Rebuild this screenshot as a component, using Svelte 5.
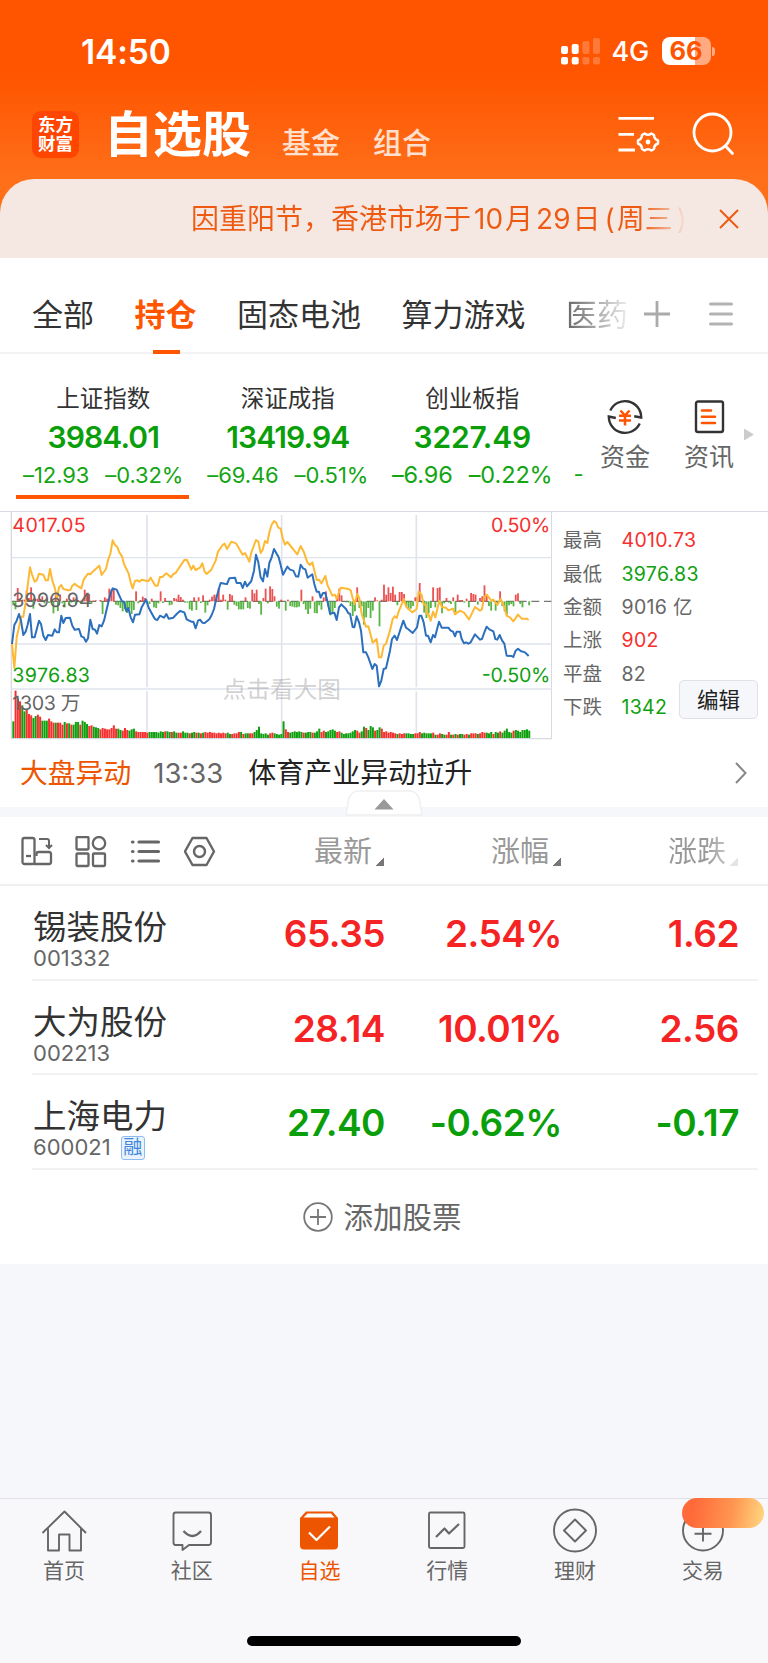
<script lang="ts">
  interface Index { name: string; value: string; change: string; pct: string }
  interface Stock { name: string; code: string; price: string; pct: string; diff: string; up: boolean; margin?: boolean }

  const groups = ['全部', '持仓', '固态电池', '算力游戏', '医药']
  let activeGroup = $state('持仓')

  const indices: Index[] = [
    { name: '上证指数', value: '3984.01', change: '–12.93', pct: '–0.32%' },
    { name: '深证成指', value: '13419.94', change: '–69.46', pct: '–0.51%' },
    { name: '创业板指', value: '3227.49', change: '–6.96', pct: '–0.22%' },
  ]
  let activeIndex = $state(0)

  const stats = [
    { label: '最高', value: '4010.73', tone: 'up' },
    { label: '最低', value: '3976.83', tone: 'down' },
    { label: '金额', value: '9016 亿', tone: '' },
    { label: '上涨', value: '902', tone: 'up' },
    { label: '平盘', value: '82', tone: '' },
    { label: '下跌', value: '1342', tone: 'down' },
  ]

  const columns = ['最新', '涨幅', '涨跌']

  const stocks: Stock[] = [
    { name: '锡装股份', code: '001332', price: '65.35', pct: '2.54%', diff: '1.62', up: true },
    { name: '大为股份', code: '002213', price: '28.14', pct: '10.01%', diff: '2.56', up: true },
    { name: '上海电力', code: '600021', price: '27.40', pct: '-0.62%', diff: '-0.17', up: false, margin: true },
  ]

  const nav = ['首页', '社区', '自选', '行情', '理财', '交易']
  let activeNav = $state('自选')

  // ── Chart data (3 chart units per pixel) ───────────────────────────────────
  const average =
    '36,415 43,487 50,395 57,365 64,333 70,333 77,290 83,240 90,185 97,210 104,228 110,224 117,204 130,207 137,224 144,224 150,190 157,225 164,245 171,280 177,245 184,238 190,250 204,254 211,253 217,240 224,234 231,240 244,248 251,222 264,204 271,206 278,198 298,180 305,208 318,190 325,160 331,145 338,104 345,118 352,124 358,140 366,152 372,175 386,204 392,230 398,248 405,226 412,224 418,228 425,222 445,227 452,216 466,240 473,240 480,214 487,214 499,203 513,215 520,205 527,202 540,182 554,162 561,163 574,192 580,180 587,193 600,186 607,173 614,198 620,205 634,192 647,165 654,138 668,118 674,114 681,130 694,108 708,113 728,147 735,142 748,168 754,140 768,103 775,108 782,142 788,132 795,106 802,112 808,80 815,57 822,46 828,50 835,66 842,69 848,97 855,117 862,109 892,146 902,121 912,140 922,170 930,178 937,170 950,223 957,222 964,233 976,211 983,240 997,270 1005,267 1010,280 1022,246 1046,250 1052,254 1058,278 1064,295 1072,265 1078,278 1085,325 1098,363 1105,362 1110,380 1118,411 1130,400 1137,455 1144,455 1151,420 1158,414 1170,375 1178,340 1184,332 1190,337 1197,315 1212,280 1218,302 1225,310 1237,320 1250,310 1256,258 1265,268 1271,296 1278,298 1280,325 1285,324 1292,345 1299,318 1306,335 1318,285 1326,304 1338,306 1345,314 1359,309 1365,326 1380,315 1392,321 1407,341 1425,304 1440,315 1446,310 1452,275 1460,267 1474,285 1480,282 1492,298 1502,280 1513,304 1520,330 1530,335 1540,347 1554,327 1565,339 1580,339 1586,343'
  const price =
    '36,415 43,358 50,345 57,325 63,345 70,388 77,378 83,357 90,325 96,395 104,395 117,345 123,355 130,390 137,403 144,388 157,390 164,371 171,380 177,380 184,330 190,352 197,337 210,336 217,360 224,372 237,370 244,392 251,395 258,408 264,398 271,342 278,370 285,372 291,384 298,358 305,362 312,345 318,320 325,290 332,262 338,248 350,252 358,270 366,287 372,288 379,317 385,307 392,335 399,350 405,327 418,326 425,305 438,282 446,306 460,332 466,341 472,343 480,330 492,336 499,325 506,339 520,336 530,325 540,316 553,320 560,341 574,348 580,348 587,368 594,345 600,342 607,351 614,352 628,341 635,328 642,310 648,282 655,255 662,232 674,234 681,235 688,218 705,216 710,232 722,232 728,247 735,228 741,242 754,226 762,195 768,147 775,170 782,215 789,227 795,190 802,213 808,172 815,155 822,130 836,155 842,178 849,207 862,183 870,192 880,195 888,212 895,213 902,177 909,188 916,191 923,216 930,211 937,206 943,235 950,258 957,258 962,276 969,262 976,262 983,290 990,324 1003,321 1010,343 1017,305 1024,296 1038,310 1045,323 1050,324 1058,364 1063,365 1070,332 1077,350 1083,375 1090,440 1098,440 1105,455 1117,490 1124,475 1130,480 1137,542 1144,525 1151,490 1158,488 1170,435 1176,400 1184,390 1191,403 1204,363 1210,345 1218,366 1224,370 1238,382 1251,365 1258,330 1264,330 1271,350 1278,390 1284,390 1292,410 1299,388 1305,395 1317,348 1325,366 1345,366 1352,375 1359,378 1365,392 1370,378 1380,378 1385,400 1392,413 1398,410 1405,414 1412,410 1425,386 1440,402 1446,400 1453,380 1460,363 1468,371 1480,377 1486,400 1492,402 1499,388 1506,404 1513,414 1520,450 1535,451 1540,454 1547,435 1554,429 1562,436 1575,440 1586,451'

  // per-minute momentum, above or below the previous close
  const momentum = [
    -12, -24, 40, 8, 5, 5, 32, 10, 42, -22, 8, 8, 6, 15, -6, 4, -5, 14, -36, 18, -29, 20, -6, -18, 8, -12, -4, 12, -10, 4, -5, 5,
    35, 22, 22, -8, 2, 3, 0, 4, -38, 12, 8, 38, 35, 38, -10, -12, -20, -30, -24, -35, -22, -38, -26, 30, -6, 4, 14, 10, -5, -8, 8, -18,
    -20, -6, 30, -5, 10, 0, -12, -10, 10, 8, 20, 13, 5, -4, -4, -24, -28, 12, -26, 12, -5, 18, -34, -12, 5, 14, 20, 20, 40, 5, 20, 5,
    -25, 22, 18, -10, -14, -24, -24, -24, 12, -20, -22, 35, 24, 35, -8, -40, 10, 38, -6, 45, 37, 15, -16, -22, 5, 0, -28, 5, -14, -16, -18, -18,
    -16, 35, -8, -25, -38, -22, 15, -35, -36, -12, -25, 12, 30, -15, -42, -36, -20, 12, 38, 18, 0, -3, -3, -14, -44, -30, 42, -20, -15, -70, -48, -20,
    -50, -28, 12, 3, -75, 5, 50, 20, 42, 25, 44, 20, -12, 28, 28, 22, -14, -24, -22, -14, 12, 12, 55, -4, -34, -50, -35, -20, 42, -18, 40, 42,
    -36, -6, 10, -4, -8, 12, -32, 20, 4, 4, -4, 8, -18, 25, 22, 20, -10, 10, 15, 48, 20, -14, -28, 4, -28, -6, 30, -14, -30, -40, -12, -8,
    -15, 20, 24, -8, -18, 0, 0, -12,
  ]

  // volume per minute, negative for minutes that closed lower
  const volume = [
    -50, 142, 118, 110, -98, -80, 84, 72, 68, -60, -66, 70, 64, -52, -52, -52, 58, 50, 46, -46, 46, 46, 40, -48, 44, -44, 40, -40, -48, -48, 40, -52,
    -48, -42, 36, 38, -34, -32, -30, 26, 30, 28, 26, 26, 30, 38, 28, -28, -24, 22, 30, 24, -22, -26, -28, 20, 18, 18, 18, 18, 16, -18, -18, -18,
    -18, -16, -20, -18, 20, -20, -18, 18, -20, -16, 16, 16, -20, -16, -16, 14, -16, -18, 16, -16, 14, -16, 18, 16, 18, 16, 16, 14, 16, 14, 16, 14,
    -16, -12, 12, 14, 14, 18, -18, 12, -14, -14, 14, 14, -18, -24, -34, -14, -12, -14, -10, 14, 16, -14, -12, -10, -12, -50, 26, 18, -16, -18, -20, -18,
    -20, -18, 16, -16, -18, -18, 16, -16, -20, -28, 18, 22, -18, -20, -24, -26, -22, 18, 20, -16, -12, -14, -14, -16, -20, -24, 22, 16, -20, -34, 30, -24,
    -36, -32, 22, -24, -32, 28, 18, 20, 16, 18, 16, 14, -12, 14, 12, 14, -14, -14, -12, -12, 14, 14, 18, -14, -16, -14, -14, -14, 16, -10, 10, 14,
    -12, -10, 10, 18, -10, 10, -12, 10, -12, -12, 10, 12, -10, 14, 14, 14, -12, 14, 18, 16, -16, -14, -18, 12, -18, -16, 20, -16, -22, -28, -18, -16,
    22, -24, -22, -18, -24, -24, -26, -22,
  ]

  const barX = (i: number) => 37 + i * 6.7
  const upColor = '#f5302e'
  const downColor = '#0fa00f'
</script>

<main>
  <header>
    <div class="status">
      <span class="clock">14:50</span>
      <div class="status-right">
        <svg class="signal" width="40" height="28" viewBox="0 0 40 28" fill="#fff">
          <rect x="0" y="9" width="7" height="8" rx="2" />
          <rect x="10.7" y="7" width="7" height="10" rx="2" />
          <rect x="0" y="20" width="7" height="7.5" rx="2" />
          <rect x="10.7" y="20" width="7" height="7.5" rx="2" />
          <g opacity=".22">
            <rect x="21.4" y="4" width="7" height="13" rx="2" />
            <rect x="32" y="1" width="7" height="16" rx="2" />
            <rect x="21.4" y="20" width="7" height="7.5" rx="2" />
            <rect x="32" y="20" width="7" height="7.5" rx="2" />
          </g>
        </svg>
        <span class="network">4G</span>
        <span class="battery">66</span>
        <span class="nub"></span>
      </div>
    </div>
    <div class="title-row">
      <div class="logo"><span>东方</span><span>财富</span></div>
      <h1>自选股</h1>
      <a class="sub" href="#fund">基金</a>
      <a class="sub" href="#portfolio">组合</a>
      <svg class="manage" width="44" height="44" viewBox="0 0 44 44" fill="none" stroke="#fff" stroke-width="2.8">
        <path d="M1.5 6.3H37M1.5 22.3H17M1.5 38H18" />
        <path d="M27.5 21.5Q31 24 34.5 21.5L37 23Q37 27 41 28.5V31.5Q37 33 37 37L34.5 38.5Q31 36 27.5 38.5L25 37Q25 33 21 31.5V28.5Q25 27 25 23Z" stroke-width="2.5" stroke-linejoin="round" />
        <circle cx="31" cy="30" r="2.4" fill="#fff" stroke="none" />
      </svg>
      <svg width="44" height="44" viewBox="0 0 44 44" fill="none" stroke="#fff" stroke-width="2.8" stroke-linecap="round">
        <circle cx="20.5" cy="20.5" r="18.5" /><path d="M33.500 34L40.500 41.5" />
      </svg>
    </div>
  </header>

  <div class="notice">
    <p>因重阳节，香港市场于<span class="num">10</span>月<span class="num">29</span>日<span class="paren">(</span>周三<span class="paren">)</span></p>
    <svg width="20" height="20" viewBox="0 0 20 20" stroke="#ee5a12" stroke-width="2"><path d="M1 1L19 19M19 1L1 19" /></svg>
  </div>

  <nav class="groups">
    {#each groups as group (group)}
      <button class:active={group === activeGroup} class:faded={group === '医药'} onclick={() => (activeGroup = group)}>{group}</button>
    {/each}
    <svg class="plus" width="26" height="26" viewBox="0 0 26 26" stroke="#aaa" stroke-width="2.8"><path d="M0 13H26M13 0V26" /></svg>
    <svg width="24" height="26" viewBox="0 0 24 26" stroke="#b3b3b3" stroke-width="3" stroke-linecap="round"><path d="M1.5 3H22.5M1.5 13H22.5M1.5 23H22.5" /></svg>
  </nav>

  <section class="indices">
    <div class="index-list">
      {#each indices as index, i (index.name)}
        <button class="index" class:selected={i === activeIndex} class:roomy={index.change.length < 6} onclick={() => (activeIndex = i)}>
          <span class="index-name">{index.name}</span>
          <span class="index-value">{index.value}</span>
          <span class="index-change"><span>{index.change}</span><span>{index.pct}</span></span>
        </button>
      {/each}
      <span class="next-index">-</span>
    </div>
    <button class="shortcut">
      <svg width="38" height="38" viewBox="0 0 38 38" fill="none" stroke="#333" stroke-width="2.4">
        <path d="M4.3 12.5A16.2 16.2 0 0 1 35.2 19.5L28.2 18.2M33.7 25.5A16.2 16.2 0 0 1 2.8 18.5L9.8 20" />
        <path d="M14.5 12.5L19 17.5L23.5 12.5M13 17.8H25M13 22.6H25M19 17.5V27.5" stroke="#ff5500" stroke-width="2.5" />
      </svg>
      资金
    </button>
    <button class="shortcut">
      <svg width="38" height="38" viewBox="0 0 38 38" fill="none" stroke="#333" stroke-width="2.4">
        <rect x="6" y="3.5" width="27" height="30.5" rx="2" />
        <path d="M12 12.5H21M12 18.7H25M12 25H25" stroke="#ff5500" stroke-width="2.6" stroke-linecap="round" />
      </svg>
      资讯
    </button>
    <svg class="more" width="10" height="13" viewBox="0 0 10 13" fill="#ccc"><path d="M0 0.5L10 6.5L0 12.5Z" /></svg>
  </section>

  <section class="board">
    <svg class="chart" width="552" height="229" viewBox="0 19 1656 687" text-rendering="geometricPrecision">
      <g fill="none" stroke="#dfe3ec" stroke-width="4">
        <path d="M34 700V19M1655 19V700M34 699H1656" stroke="#d8dae2" />
        <path d="M36 156H1654M36 415H1654" />
        <path d="M441 28V545M441 557V697M845 28V545M845 557V697M1249 28V545M1249 557V697" stroke-width="5" />
        <path d="M34 550H1656" stroke-width="5" />
      </g>
      <path d="M36 287H1654" stroke="#777" stroke-width="4" stroke-dasharray="24 14" />
      <g opacity=".88">
        {#each momentum as m, i}
          <rect x={barX(i)} y={m > 0 ? 287 - m : 287} width="5.5" height={Math.abs(m)} fill={m > 0 ? '#e93b3b' : '#44ab2c'} />
        {/each}
      </g>
      {#each volume as v, i}
        <rect x={barX(i)} y={697 - Math.abs(v)} width="6" height={Math.abs(v)} fill={v > 0 ? upColor : downColor} />
      {/each}
      <polyline points={average} fill="none" stroke="#fdb933" stroke-width="6" stroke-linejoin="round" />
      <polyline points={price} fill="none" stroke="#2b6fbd" stroke-width="6" stroke-linejoin="round" />
      <g font-size="59">
        <text x="37" y="80" fill={upColor} textLength="220">4017.05</text>
        <text x="37" y="304" fill="#666" textLength="238">3996.94</text>
        <text x="37" y="528" fill={downColor} textLength="233">3976.83</text>
        <text x="37" y="614" fill="#666" textLength="204">1303 万</text>
        <text x="1651" y="80" fill={upColor} text-anchor="end" textLength="178">0.50%</text>
        <text x="1651" y="528" fill={downColor} text-anchor="end" textLength="206">-0.50%</text>
        <text x="668" y="577" fill="#888" fill-opacity=".4" font-size="71">点击看大图</text>
      </g>
    </svg>
    <div class="stats">
      {#each stats as stat (stat.label)}
        <div class="stat"><span>{stat.label}</span><b class={stat.tone}>{stat.value}</b></div>
      {/each}
      <button class="edit">编辑</button>
    </div>
  </section>

  <section class="news">
    <span class="tag">大盘异动</span>
    <span class="time">13:33</span>
    <span class="headline">体育产业异动拉升</span>
    <svg width="12" height="22" viewBox="0 0 12 22" fill="none" stroke="#888" stroke-width="2"><path d="M1 1L10.5 11L1 21" /></svg>
  </section>

  <div class="divider">
    <svg width="78" height="26" viewBox="0 0 78 26">
      <path d="M1 25L3.5 10Q5.5 1 14 1H64Q72.5 1 74.5 10L77 25Z" fill="#fff" stroke="#eff0f2" stroke-width="1.5" />
      <path d="M29.5 19.5L39 9L48.5 19.5Z" fill="#999" />
    </svg>
  </div>

  <section class="list-head">
    <div class="tools">
      <svg width="32" height="32" viewBox="0 0 32 32" fill="none" stroke="#666" stroke-width="2.3">
        <rect x="1.5" y="2" width="12" height="26" rx="2" /><path d="M5 20H10" />
        <path d="M18 3H26Q28 3 28 5V12M25 9L28 12L31 9" stroke-width="2" />
        <path d="M15.500 20V18Q15.500 16 17.500 16H28Q30 16 30 18.500V26Q30 28 28 28H13" />
      </svg>
      <svg width="32" height="32" viewBox="0 0 32 32" fill="none" stroke="#666" stroke-width="2.3">
        <rect x="1.5" y="1" width="12" height="12.5" rx="1" /><rect x="1.5" y="17.500" width="12" height="12.5" rx="1" />
        <rect x="18" y="17.500" width="12" height="12.5" rx="1" /><circle cx="24" cy="7.2" r="6.2" />
      </svg>
      <svg width="32" height="32" viewBox="0 0 32 32" stroke="#666" stroke-width="3.2" stroke-linecap="round">
        <path d="M9 6H28.5M9 15.5H28.5M9 25H28.5M2.5 6H3M2.5 15.5H3M2.5 25H3" />
      </svg>
      <svg width="32" height="32" viewBox="0 0 32 32" fill="none" stroke="#666" stroke-width="2.4" stroke-linejoin="round">
        <path d="M8.5 2H22.5L30 15.5L22.5 29H8.500L1 15.5Z" /><circle cx="15.5" cy="15.5" r="5.5" />
      </svg>
    </div>
    {#each columns as column (column)}
      <button class="column" class:fading={column === '涨跌'}>{column}<i></i></button>
    {/each}
  </section>

  <section class="stocks">
    {#each stocks as stock (stock.code)}
      <div class="stock" class:rise={stock.up}>
        <div class="who">
          <span class="name">{stock.name}</span>
          <span class="code">{stock.code}{#if stock.margin}<em>融</em>{/if}</span>
        </div>
        <span class="figure">{stock.price}</span>
        <span class="figure">{stock.pct}</span>
        <span class="figure">{stock.diff}</span>
      </div>
    {/each}
    <button class="add">
      <svg width="30" height="30" viewBox="0 0 30 30" fill="none" stroke="#777" stroke-width="1.8"><circle cx="15" cy="15" r="13.8" /><path d="M7 15H23M15 7V23" /></svg>
      <span>添加股票</span>
    </button>
  </section>

  <footer>
    <nav class="bottom-nav">
      {#each nav as item (item)}
        <button class:active={item === activeNav} onclick={() => (activeNav = item)}>
          <svg width="46" height="46" viewBox="0 0 46 46" fill="none" stroke="#666" stroke-width="1.9" stroke-linejoin="round">
            {#if item === '首页'}
              <path d="M1.5 25L23.5 3.5L45 25M7 20.5V42.5H18V26.5H28.5V42.5H40V20.5" />
            {:else if item === '社区'}
              <path d="M6.5 4.5H39.5Q42 4.500 42 7V34.5Q42 37 39.5 37H20L13.500 42V37H6.5Q4.5 37 4.5 34.5V7Q4.5 4.5 6.5 4.5Z" />
              <path d="M14.5 23Q23.5 33 32 23" stroke-width="2.3" />
            {:else if item === '自选'}
              <path d="M10 3.5H36.5L42 10V37.5Q42 41.5 38 41.5H8Q4 41.5 4 37.5V10Z" fill="#ee5500" stroke="none" />
              <path d="M11.5 5.5H35L38.5 9.5H7.5Z" fill="#fff" stroke="none" />
              <path d="M13 24.5L20.5 32L34 18.5" stroke="#fff" stroke-width="2.2" />
            {:else if item === '行情'}
              <rect x="5" y="4.5" width="35.5" height="35.5" rx="1.5" />
              <path d="M12 29L20.5 20.5L25 25.5L35 16" stroke-width="2.2" />
            {:else if item === '理财'}
              <circle cx="23" cy="22.5" r="21" /><path d="M23 11.5L34 22.5L23 33.5L12 22.5Z" />
            {:else}
              <circle cx="23" cy="22.5" r="20" /><path d="M14.5 25.8H31.5M23 17V33.5" />
            {/if}
          </svg>
          {item}
          {#if item === '交易'}<span class="pill"></span>{/if}
        </button>
      {/each}
    </nav>
    <div class="home-bar"></div>
  </footer>
</main>

<style>
  :global(body) { background: #f6f7f9; }

  main {
    width: 768px;
    height: 1663px;
    display: flex;
    flex-direction: column;
    overflow: hidden;
    background: #f6f7fa;
    font-family: Inter, "Noto Sans CJK SC", sans-serif;
    color: #333;
  }
  main * { box-sizing: border-box; }
  svg { display: block; flex-shrink: 0; }

  button {
    font: inherit;
    color: inherit;
    background: none;
    border: none;
    padding: 0;
    margin: 0;
    white-space: nowrap;
    cursor: pointer;
  }

  header {
    height: 214px;
    flex-shrink: 0;
    background: linear-gradient(#ff5500 0, #ff5500 76px, #ff6e19 175px);
    color: #fff;
  }

  .status {
    display: flex;
    justify-content: space-between;
    align-items: center;
    height: 102px;
    padding: 0 53px 0 81px;
  }
  .clock { padding-top: 1px; font-size: 33.5px; font-weight: 600; letter-spacing: -.1px; }
  .status-right { display: flex; align-items: center; }
  .network { width: 37px; margin: 1px 13px 0 11px; font-size: 27px; font-weight: 500; letter-spacing: -.3px; }
  .battery {
    width: 49px;
    height: 28px;
    border-radius: 8px;
    background: linear-gradient(90deg, #fff 33px, #ffaa80 33px);
    color: #ff5500;
    font-size: 25.5px;
    font-weight: 700;
    line-height: 28px;
    text-align: center;
  }
  .nub { width: 3px; height: 9px; margin-left: 1.5px; border-radius: 0 4px 4px 0; background: #ffaa80; }

  .title-row { display: flex; align-items: center; height: 64px; padding: 0 32px; }
  .logo {
    width: 47px;
    height: 47px;
    border-radius: 9px;
    background: #ff4600;
    display: flex;
    flex-direction: column;
    align-items: center;
    justify-content: center;
    font-size: 17.5px;
    font-weight: 700;
    line-height: 19.5px;
  }
  h1 { margin: 1px 31px 0 25px; font-size: 49px; font-weight: 700; line-height: 60px; }
  .sub { margin: 20px 33px 0 0; font-size: 29px; font-weight: 500; line-height: 36px; color: #ffe0cf; text-decoration: none; }
  .manage { margin: 0 31px 0 auto; }

  .notice {
    display: flex;
    align-items: center;
    height: 79px;
    margin-top: -35px;
    padding: 0 29px 0 191px;
    border-radius: 34px 34px 0 0;
    background: #f5e8e3;
    flex-shrink: 0;
  }
  .notice p {
    flex: 1;
    margin: 0;
    font-size: 28px;
    line-height: 40px;
    white-space: nowrap;
    background: linear-gradient(90deg, #ee5a12 450px, #f5e0d8 494px);
    background-clip: text;
    color: transparent;
  }
  .num { padding: 0 2px 0 3px; }
  .paren { padding: 0 2px 0 4px; }

  .groups {
    display: flex;
    align-items: center;
    height: 96px;
    padding: 18px 35px 0 32px;
    background: #fff;
    border-bottom: 2px solid #f3f3f5;
    flex-shrink: 0;
  }
  .groups button { position: relative; height: 77px; margin-right: 40.5px; font-size: 31px; line-height: 77px; }
  .groups .active { color: #ff5500; font-weight: 700; }
  .groups .active::after {
    content: '';
    position: absolute;
    left: 50%;
    bottom: -1px;
    width: 27px;
    height: 4px;
    margin-left: -13px;
    background: #ff5500;
  }
  .groups .faded { margin-right: 16px; background: linear-gradient(90deg, #666, #eee); background-clip: text; color: transparent; }
  .plus { margin-right: auto; }

  .indices { display: flex; height: 157px; background: #fff; flex-shrink: 0; }
  .index-list { display: flex; width: 585px; margin-right: -2px; padding-left: 11px; overflow: hidden; }
  .index {
    position: relative;
    display: flex;
    flex-direction: column;
    align-items: center;
    width: 184.5px;
    flex-shrink: 0;
    padding-top: 28px;
  }
  .selected::after { content: ''; position: absolute; left: 5px; top: 141px; width: 173px; height: 4px; background: #ff5500; }
  .index-name { font-size: 23.5px; line-height: 34px; }
  .index-value { font-size: 30px; line-height: 42px; font-weight: 600; letter-spacing: -.9px; color: #0a9f0a; }
  .index-change { display: flex; gap: 16px; font-size: 22px; line-height: 34px; color: #13a513; letter-spacing: -.1px; }
  .roomy .index-value { letter-spacing: -.2px; }
  .roomy .index-change { font-size: 23.5px; }
  .next-index { padding: 103px 0 0 9px; font-size: 22px; line-height: 34px; color: #13a513; }
  .shortcut {
    display: flex;
    flex-direction: column;
    align-items: center;
    width: 84px;
    padding-top: 44px;
    font-size: 25px;
    line-height: 42px;
    color: #666;
  }
  .more { margin: 74px 0 0 -7px; }

  .board { display: flex; height: 229px; background: #fff; flex-shrink: 0; border-top: 1.5px solid #d8dae2; }
  .stats { position: relative; flex: 1; padding: 12px 0 0 11px; }
  .stat { display: flex; height: 33.4px; align-items: center; font-size: 19.5px; line-height: 33px; color: #666; }
  .stat span { width: 58.5px; }
  .stat b { font-weight: 400; letter-spacing: .3px; }
  .stat .up { color: #f5302e; }
  .stat .down { color: #0fa00f; }
  .edit {
    position: absolute;
    right: 10px;
    top: 168px;
    width: 79px;
    height: 39px;
    border: 1.5px solid #dfe1e6;
    border-radius: 5px;
    background: #f6f7fa;
    color: #222;
    font-size: 21.5px;
    line-height: 34px;
  }

  .news { display: flex; align-items: center; height: 67px; padding: 0 21px 2px 20px; background: #fff; font-size: 28px; line-height: 40px; flex-shrink: 0; }
  .tag { color: #ee5500; font-size: 27.8px; }
  .time { margin: 0 25px 0 22px; color: #666; font-size: 27.5px; }
  .headline { color: #222; }
  .news svg { margin-left: auto; }

  .divider { position: relative; height: 10px; background: #f6f7fa; flex-shrink: 0; }
  .divider svg { position: absolute; left: 345px; bottom: 1px; }

  .list-head { display: flex; align-items: center; height: 69px; padding: 2px 30px 0 0; background: #fff; border-bottom: 2px solid #f0f0f3; flex-shrink: 0; }
  .tools { display: flex; gap: 22.4px; width: 207px; padding-left: 21px; }
  .column { width: 177px; display: flex; justify-content: flex-end; align-items: center; padding-top: 1px; font-size: 29px; line-height: 40px; color: #999; }
  .column i { width: 8px; height: 8px; margin: 19px 0 0 4px; background: linear-gradient(135deg, transparent 50%, #777 50%); }
  .fading { background: linear-gradient(90deg, #999 145px, #ddd 177px); background-clip: text; color: transparent; }
  .fading i { opacity: .2; }

  .stocks { background: #fff; height: 378px; flex-shrink: 0; padding-left: 32px; }
  .stock { display: flex; height: 94.5px; margin-right: 10px; padding-right: 19px; border-bottom: 2px solid #f2f2f4; color: #0a9f0a; }
  .rise { color: #f52323; }
  .who { display: flex; flex-direction: column; width: 176px; padding: 18px 0 0 1px; }
  .name { font-size: 33.5px; line-height: 46px; color: #333; }
  .code { display: flex; align-items: center; font-size: 22px; line-height: 17px; color: #666; }
  .code em {
    width: 24px;
    height: 24px;
    margin: -3px 0 -4px 10px;
    border: 1.5px solid #8fbdf0;
    border-radius: 3px;
    background: #eaf3fd;
    color: #3d87dc;
    font-size: 19px;
    font-style: normal;
    line-height: 21px;
    text-align: center;
  }
  .figure { width: 177px; padding-top: 2px; text-align: right; font-size: 37px; font-weight: 600; line-height: 92px; letter-spacing: -.5px; white-space: nowrap; }
  .add { display: flex; align-items: center; justify-content: center; gap: 10px; width: 100%; height: 94px; padding-right: 35px; font-size: 29.5px; color: #666; }
  .add span { margin-top: -3px; }

  footer { height: 165px; margin-top: auto; background: #f8f8fb; border-top: 1.5px solid #dfe1e5; flex-shrink: 0; }
  .bottom-nav { display: flex; height: 137px; padding-top: 1px; }
  .bottom-nav button {
    position: relative;
    display: flex;
    flex-direction: column;
    align-items: center;
    width: 127.8px;
    padding-top: 8px;
    font-size: 21px;
    line-height: 34px;
    color: #666;
  }
  .bottom-nav .active { color: #ee5500; }
  .pill {
    position: absolute;
    left: 43px;
    top: -2px;
    width: 82px;
    height: 30px;
    border-radius: 15px;
    background: linear-gradient(100deg, #ff6a3a 15%, #ff9550 60%, #ffd982);
  }
  .home-bar { width: 274px; height: 10px; margin: 0 auto; border-radius: 5px; background: #000; }
</style>
